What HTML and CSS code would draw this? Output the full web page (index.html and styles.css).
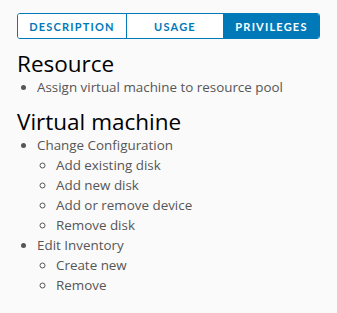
FILE: index.html
```html
<!DOCTYPE html>
<html lang="en">
<head>
    <meta charset="UTF-8">
    <title>Privileges</title>
    <link rel="stylesheet" href="styles.css">
</head>
<body>
    <div class="panel">
        <div class="btn-group">
            <button class="btn">Description</button>
            <button class="btn">Usage</button>
            <button class="btn active">Privileges</button>
        </div>

        <h3>Resource</h3>
        <ul class="list">
            <li>Assign virtual machine to resource pool</li>
        </ul>

        <h3>Virtual machine</h3>
        <ul class="list">
            <li>Change Configuration
                <ul class="sub">
                    <li>Add existing disk</li>
                    <li>Add new disk</li>
                    <li>Add or remove device</li>
                    <li>Remove disk</li>
                </ul>
            </li>
            <li>Edit Inventory
                <ul class="sub">
                    <li>Create new</li>
                    <li>Remove</li>
                </ul>
            </li>
        </ul>
    </div>
</body>
</html>
```

FILE: styles.css
```css
body {
    margin: 0;
    background-color: #fafafa;
    font-family: "Open Sans", Lato, sans-serif;
    color: #565656;
}
.panel {
    padding: 13px 17px;
}
.btn-group {
    display: flex;
    width: 303px;
    height: 26px;
    border: 1px solid #0079b8;
    border-radius: 3px;
    box-sizing: border-box;
    overflow: hidden;
}
.btn {
    height: 100%;
    padding: 0;
    border: none;
    border-left: 1px solid #0079b8;
    background: #fff;
    color: #0079b8;
    font-family: Lato, sans-serif;
    font-size: 11px;
    font-weight: 700;
    letter-spacing: 1.2px;
    text-transform: uppercase;
}
.btn:nth-child(1) {
    width: 108px;
    border-left: none;
}
.btn:nth-child(2) {
    width: 97px;
}
.btn:nth-child(3) {
    flex: 1;
}
.btn.active {
    background: #0079b8;
    color: #fff;
}
h3 {
    margin: 12px 0 0;
    font-size: 22.5px;
    font-weight: 400;
    line-height: 26px;
    color: #000;
}
.list {
    margin: 0;
    padding-left: 20px;
    font-size: 13.4px;
    line-height: 20px;
}
.list > li {
    list-style: disc;
}
.sub {
    margin: 0;
    padding-left: 19px;
}
.sub > li {
    list-style: circle;
}
```
